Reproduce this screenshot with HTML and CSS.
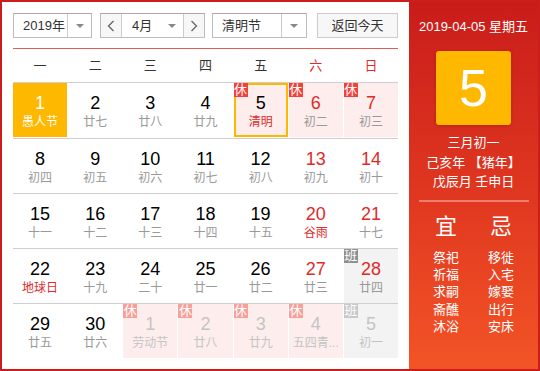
FILE: index.html
```html
<!DOCTYPE html>
<html lang="zh-CN">
<head>
<meta charset="utf-8">
<title>万年历</title>
<link rel="stylesheet" href="styles.css">
</head>
<body>
<div class="cal">
  <div class="main">
    <div class="toolbar">
      <div class="sel sel-year"><span class="sel-text">2019年</span><span class="sel-arrow"><i class="tri"></i></span></div>
      <div class="sel sel-month">
        <span class="nav"><svg width="8" height="12" viewBox="0 0 8 12"><polyline points="6.5,1 1.5,6 6.5,11" fill="none" stroke="#666" stroke-width="1.3"/></svg></span>
        <span class="sel-text month-text">4月</span>
        <span class="sel-arrow"><i class="tri"></i></span>
        <span class="nav"><svg width="8" height="12" viewBox="0 0 8 12"><polyline points="1.5,1 6.5,6 1.5,11" fill="none" stroke="#666" stroke-width="1.3"/></svg></span>
      </div>
      <div class="sel sel-holiday"><span class="sel-text">清明节</span><span class="sel-arrow"><i class="tri"></i></span></div>
      <div class="btn-today">返回今天</div>
    </div>

    <div class="week">
      <span>一</span><span>二</span><span>三</span><span>四</span><span>五</span><span class="we">六</span><span class="we">日</span>
    </div>

    <div class="row">
      <div class="day today"><b>1</b><em>愚人节</em></div>
      <div class="day"><b>2</b><em>廿七</em></div>
      <div class="day"><b>3</b><em>廿八</em></div>
      <div class="day"><b>4</b><em>廿九</em></div>
      <div class="day rest selected"><i class="tag">休</i><b>5</b><em class="fest">清明</em></div>
      <div class="day rest weekend"><i class="tag">休</i><b>6</b><em>初二</em></div>
      <div class="day rest weekend"><i class="tag">休</i><b>7</b><em>初三</em></div>
    </div>
    <div class="row">
      <div class="day"><b>8</b><em>初四</em></div>
      <div class="day"><b>9</b><em>初五</em></div>
      <div class="day"><b>10</b><em>初六</em></div>
      <div class="day"><b>11</b><em>初七</em></div>
      <div class="day"><b>12</b><em>初八</em></div>
      <div class="day weekend"><b>13</b><em>初九</em></div>
      <div class="day weekend"><b>14</b><em>初十</em></div>
    </div>
    <div class="row">
      <div class="day"><b>15</b><em>十一</em></div>
      <div class="day"><b>16</b><em>十二</em></div>
      <div class="day"><b>17</b><em>十三</em></div>
      <div class="day"><b>18</b><em>十四</em></div>
      <div class="day"><b>19</b><em>十五</em></div>
      <div class="day weekend"><b>20</b><em class="fest">谷雨</em></div>
      <div class="day weekend"><b>21</b><em>十七</em></div>
    </div>
    <div class="row">
      <div class="day"><b>22</b><em class="fest">地球日</em></div>
      <div class="day"><b>23</b><em>十九</em></div>
      <div class="day"><b>24</b><em>二十</em></div>
      <div class="day"><b>25</b><em>廿一</em></div>
      <div class="day"><b>26</b><em>廿二</em></div>
      <div class="day weekend"><b>27</b><em>廿三</em></div>
      <div class="day work weekend"><i class="tag tag-work">班</i><b>28</b><em>廿四</em></div>
    </div>
    <div class="row">
      <div class="day"><b>29</b><em>廿五</em></div>
      <div class="day"><b>30</b><em>廿六</em></div>
      <div class="day rest other"><i class="tag">休</i><b>1</b><em>劳动节</em></div>
      <div class="day rest other"><i class="tag">休</i><b>2</b><em>廿八</em></div>
      <div class="day rest other"><i class="tag">休</i><b>3</b><em>廿九</em></div>
      <div class="day rest other"><i class="tag">休</i><b>4</b><em>五四青...</em></div>
      <div class="day work other"><i class="tag tag-work">班</i><b>5</b><em>初一</em></div>
    </div>
  </div>

  <div class="side">
    <div class="side-date">2019-04-05 星期五</div>
    <div class="big-day">5</div>
    <div class="lunar">
      <p>三月初一</p>
      <p>己亥年 【猪年】</p>
      <p>戊辰月 壬申日</p>
    </div>
    <div class="divider"></div>
    <div class="yiji">
      <div class="col">
        <div class="yj-title">宜</div>
        <p>祭祀</p><p>祈福</p><p>求嗣</p><p>斋醮</p><p>沐浴</p>
      </div>
      <div class="col">
        <div class="yj-title">忌</div>
        <p>移徙</p><p>入宅</p><p>嫁娶</p><p>出行</p><p>安床</p>
      </div>
    </div>
  </div>
</div>
</body>
</html>
```

FILE: styles.css
```css
* { box-sizing: border-box; }
html, body { margin: 0; padding: 0; background: #fff; }
body {
  font-family: "Liberation Sans", "Noto Sans CJK SC", sans-serif;
  color: #333;
}
p { margin: 0; }
b, em, i { font-style: normal; font-weight: normal; }

.cal {
  width: 540px;
  height: 371px;
  border: 2px solid #cb1d1b;
  display: flex;
  overflow: hidden;
}

.main {
  width: 407px;
  padding: 11px 11px 0 11px;
  flex: none;
}

/* toolbar */
.toolbar {
  display: flex;
  height: 25px;
  margin-bottom: 10px;
}
.sel {
  display: flex;
  height: 25px;
  border: 1px solid #bdbdbd;
  border-top-color: #a9a9a9;
  background: #fff;
  font-size: 13px;
  line-height: 23px;
  color: #333;
}
.sel-text { flex: 1; padding-left: 9px; }
.sel-arrow {
  width: 24px;
  border-left: 1px solid #ccc;
  display: flex;
  align-items: center;
  justify-content: center;
}
.tri {
  width: 0; height: 0;
  border-left: 4px solid transparent;
  border-right: 4px solid transparent;
  border-top: 4px solid #888;
}
.sel-year { width: 79px; margin-right: 8px; }
.sel-month { width: 105px; margin-right: 7px; }
.sel-month .nav {
  width: 21px;
  background: #f7f7f7;
  display: flex;
  align-items: center;
  justify-content: center;
}
.sel-month .nav:first-child { border-right: 1px solid #ccc; }
.sel-month .nav:last-child { border-left: 1px solid #ccc; }
.month-text { padding-left: 10px; }
.sel-month .sel-arrow { border-left: none; width: 22px; }
.sel-holiday { width: 95px; margin-right: 10px; }
.sel-holiday .sel-arrow { width: 25px; }
.btn-today {
  width: 81px;
  height: 25px;
  border: 1px solid #ccc;
  background: #f7f7f7;
  font-size: 13px;
  line-height: 23px;
  text-align: center;
  color: #333;
}

/* weekday header */
.week {
  display: grid;
  grid-template-columns: repeat(7, minmax(0, 1fr));
  column-gap: 1px;
  border-top: 1px solid #e55a52;
  border-bottom: 1px solid #cfcfcf;
  height: 35px;
  font-size: 13px;
  line-height: 33px;
  text-align: center;
  color: #333;
}
.week .we { color: #e02a2a; }

/* day rows */
.row {
  display: grid;
  grid-template-columns: repeat(7, minmax(0, 1fr));
  column-gap: 1px;
  height: 55px;
}
.row + .row { border-top: 1px solid #cfcfcf; }
.row:first-of-type { height: 54px; }

.day {
  position: relative;
  height: 54px;
  min-width: 0;
  padding-top: 9px;
  text-align: center;
}
.day b {
  display: block;
  font-size: 18px;
  line-height: 22px;
  color: #000;
}
.day em {
  display: block;
  font-size: 12px;
  line-height: 16px;
  color: #999;
  white-space: nowrap;
}
.day em.fest { color: #e02a2a; }
.day.weekend b { color: #e02a2a; }

.day.today { background: #ffb800; }
.day.today b, .day.today em { color: #fff; }

.day.rest { background: #fdeeed; }
.day.work { background: #f3f3f3; }
.day.selected { box-shadow: inset 0 0 0 2px #ffb800; }

.tag {
  position: absolute;
  top: 0;
  left: 0;
  width: 14px;
  height: 14px;
  background: #f2403c;
  color: #fff;
  font-size: 13px;
  line-height: 14px;
  text-align: center;
}
.tag-work { background: #909090; }

.day.other b, .day.other em { color: #c4c4c4; }
.day.other .tag { background: #f7a099; }
.day.other .tag-work { background: #c8c8c8; }

/* side panel */
.side {
  flex: 1;
  background: linear-gradient(180deg, #c91c1a 0%, #df3620 50%, #f35426 100%);
  color: #fff;
  text-align: center;
  padding-top: 17px;
}
.side-date {
  font-size: 13px;
  line-height: 16px;
}
.big-day {
  width: 75px;
  height: 74px;
  margin: 16px auto 0;
  background: #ffb800;
  border-radius: 3px;
  box-shadow: 0 1px 3px rgba(120, 20, 0, 0.35);
  font-size: 52px;
  line-height: 74px;
  color: #fff;
}
.lunar {
  margin-top: 8px;
  font-size: 13px;
  line-height: 19.5px;
}
.divider {
  width: 110px;
  height: 2px;
  margin: 8px auto 0;
  background: rgba(255, 255, 255, 0.35);
}
.yiji {
  display: grid;
  grid-template-columns: 55px 55px;
  justify-content: center;
  margin-top: 10px;
}
.yj-title {
  font-size: 22px;
  line-height: 30px;
  margin-bottom: 7px;
}
.yiji p {
  font-size: 13px;
  line-height: 17.4px;
}
```
